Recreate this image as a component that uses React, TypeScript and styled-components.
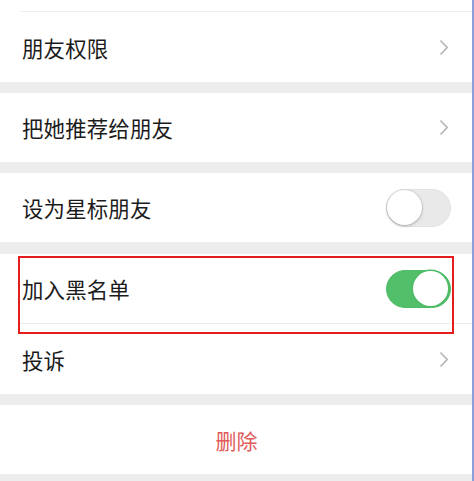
import React, { useState } from 'react'
import styled, { createGlobalStyle } from 'styled-components'

const GlobalStyle = createGlobalStyle`
  html, body {
    margin: 0;
    padding: 0;
    background: #ededed;
  }
  body {
    font-family: "Noto Sans CJK SC", "Noto Sans", sans-serif;
  }
`

const Page = styled.div`
  width: 474px;
  height: 481px;
  overflow: hidden;
  display: flex;
  background: #ededed;
`

const Screen = styled.div`
  flex: 1;
  display: flex;
  flex-direction: column;
  background: #ededed;
`

const Edge = styled.div`
  width: 2px;
  background: #8c9ed8;
`

const Group = styled.section<{ gap?: number }>`
  background: #fff;
  margin-bottom: ${p => p.gap ?? 11}px;
  display: flex;
  flex-direction: column;
`

const TopStub = styled.div`
  height: 11px;
  border-bottom: 1px solid #efefef;
  margin-left: 20px;
`

const Row = styled.div<{ h?: number }>`
  position: relative;
  height: ${p => p.h ?? 69}px;
  display: flex;
  align-items: center;
  padding: 0 23px 0 22px;
`

const Divider = styled.div`
  height: 1px;
  background: #ececec;
  margin-left: 20px;
`

const Label = styled.span`
  flex: 1;
  font-size: 21.4px;
  color: #1b1b1b;
  letter-spacing: 0.2px;
`

const DangerLabel = styled.span`
  flex: 1;
  text-align: center;
  font-size: 21px;
  color: #df5a58;
  margin-left: 2px;
`

const Track = styled.button<{ on: boolean }>`
  position: relative;
  width: 65px;
  height: 38px;
  border-radius: 19px;
  padding: 0;
  margin-right: -2px;
  border: 1.5px solid ${p => (p.on ? '#4fbb67' : '#e3e3e3')};
  background: ${p => (p.on ? '#52bf6a' : '#e9e9e9')};
  cursor: pointer;
`

const Knob = styled.span<{ on: boolean }>`
  position: absolute;
  top: 0;
  left: ${p => (p.on ? '26px' : '0')};
  width: 35px;
  height: 35px;
  border-radius: 50%;
  background: #fff;
  box-shadow: ${p =>
    p.on ? '0 0 0 1.5px #4fbb67' : '0 1px 3px rgba(0,0,0,0.25), 0 0 0 1px #dcdcdc'};
`

const Highlight = styled.div`
  position: absolute;
  left: 18px;
  right: 18px;
  top: 2px;
  height: 74px;
  border: 2px solid #e31c1c;
  pointer-events: none;
  z-index: 2;
`

const Chevron = () => (
  <svg width="10" height="17" viewBox="0 0 10 17">
    <path d="M1.5 1.5 L8.2 8.5 L1.5 15.5" fill="none" stroke="#b4b4b4" strokeWidth="1.6" />
  </svg>
)

const Toggle = ({ on, onClick }: { on: boolean; onClick: () => void }) => (
  <Track on={on} onClick={onClick}>
    <Knob on={on} />
  </Track>
)

export default () => {
  const [starred, setStarred] = useState(false)
  const [blocked, setBlocked] = useState(true)

  return (
    <Page>
      <GlobalStyle />
      <Screen>
        <Group>
          <TopStub />
          <Row h={70}>
            <Label>朋友权限</Label>
            <Chevron />
          </Row>
        </Group>
        <Group>
          <Row>
            <Label>把她推荐给朋友</Label>
            <Chevron />
          </Row>
        </Group>
        <Group gap={12}>
          <Row>
            <Label>设为星标朋友</Label>
            <Toggle on={starred} onClick={() => setStarred(!starred)} />
          </Row>
        </Group>
        <Group>
          <Row h={69}>
            <Highlight />
            <Label>加入黑名单</Label>
            <Toggle on={blocked} onClick={() => setBlocked(!blocked)} />
          </Row>
          <Divider />
          <Row h={70}>
            <Label>投诉</Label>
            <Chevron />
          </Row>
        </Group>
        <Group>
          <Row>
            <DangerLabel>删除</DangerLabel>
          </Row>
        </Group>
      </Screen>
      <Edge />
    </Page>
  )
}
